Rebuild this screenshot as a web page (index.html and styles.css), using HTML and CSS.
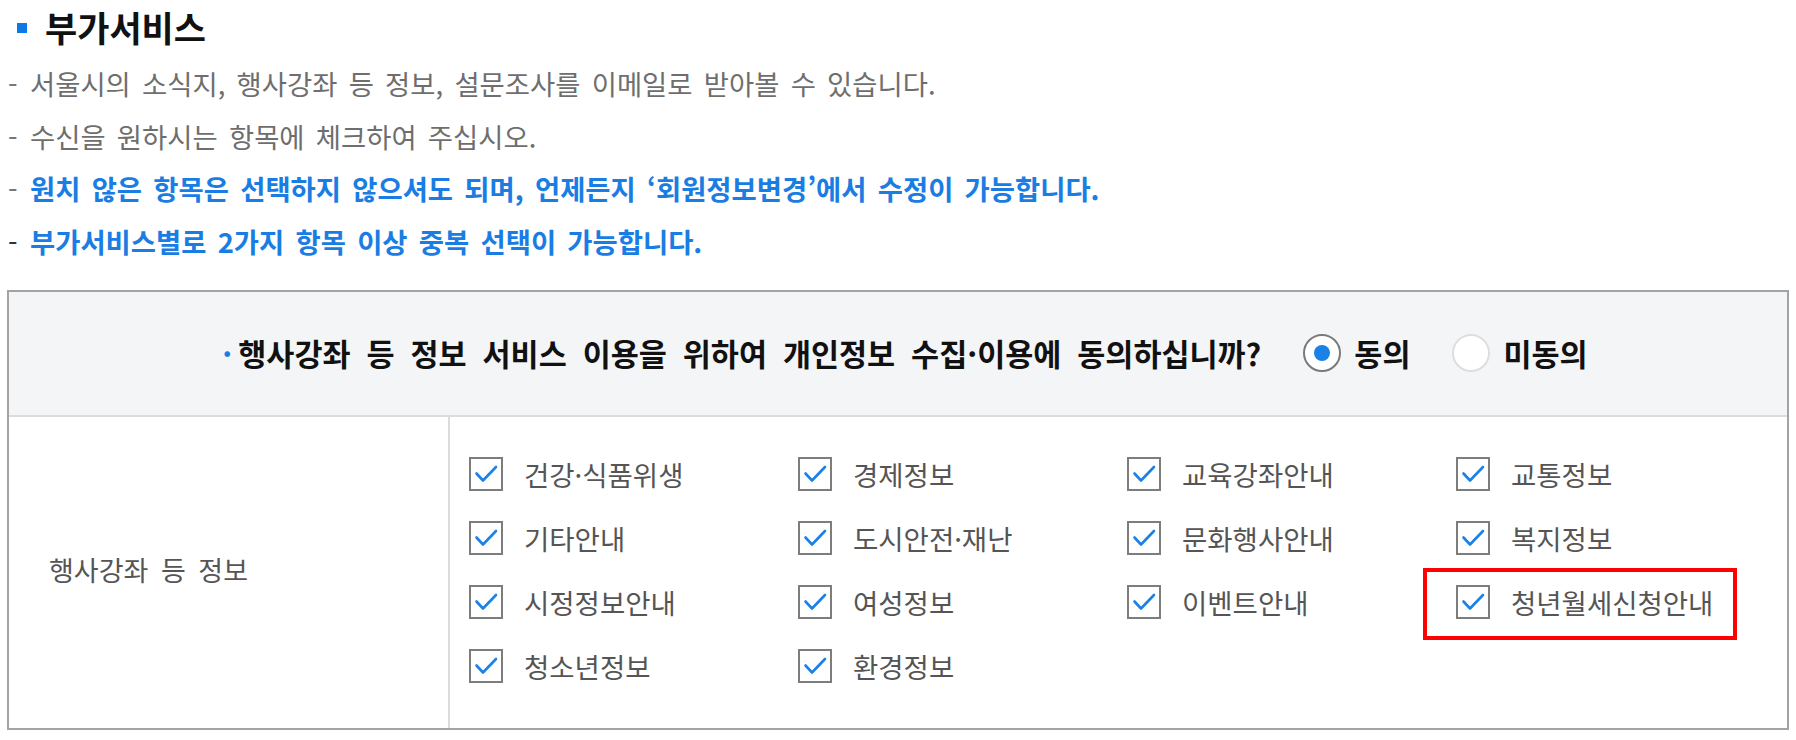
FILE: index.html
```html
<!DOCTYPE html>
<html lang="ko">
<head>
<meta charset="utf-8">
<link rel="stylesheet" href="styles.css">
</head>
<body>
<div class="page">
  <h2 class="title"><span class="sq"></span>부가서비스</h2>
  <ul class="notes">
    <li class="gray"><span class="dash">-</span>서울시의 소식지, 행사강좌 등 정보, 설문조사를 이메일로 받아볼 수 있습니다.</li>
    <li class="gray"><span class="dash">-</span>수신을 원하시는 항목에 체크하여 주십시오.</li>
    <li class="blue"><span class="dash">-</span>원치 않은 항목은 선택하지 않으셔도 되며, 언제든지 ‘회원정보변경’에서 수정이 가능합니다.</li>
    <li class="blue"><span class="dash dark">-</span>부가서비스별로 2가지 항목 이상 중복 선택이 가능합니다.</li>
  </ul>
  <div class="table">
    <div class="thead">
      <span class="q"><span class="dot">·</span>행사강좌 등 정보 서비스 이용을 위하여 개인정보 수집·이용에 동의하십니까?</span>
      <label class="radio on"><span class="rb"></span>동의</label>
      <label class="radio"><span class="rb"></span>미동의</label>
    </div>
    <div class="tbody">
      <div class="label">행사강좌 등 정보</div>
      <div class="grid">
        <div class="item"><svg class="cb" viewBox="0 0 34 34"><rect x="1" y="1" width="32" height="32"/><path d="M7.5 16.5 L14 23.5 L27 10"/></svg><span>건강·식품위생</span></div>
        <div class="item"><svg class="cb" viewBox="0 0 34 34"><rect x="1" y="1" width="32" height="32"/><path d="M7.5 16.5 L14 23.5 L27 10"/></svg><span>경제정보</span></div>
        <div class="item"><svg class="cb" viewBox="0 0 34 34"><rect x="1" y="1" width="32" height="32"/><path d="M7.5 16.5 L14 23.5 L27 10"/></svg><span>교육강좌안내</span></div>
        <div class="item"><svg class="cb" viewBox="0 0 34 34"><rect x="1" y="1" width="32" height="32"/><path d="M7.5 16.5 L14 23.5 L27 10"/></svg><span>교통정보</span></div>
        <div class="item"><svg class="cb" viewBox="0 0 34 34"><rect x="1" y="1" width="32" height="32"/><path d="M7.5 16.5 L14 23.5 L27 10"/></svg><span>기타안내</span></div>
        <div class="item"><svg class="cb" viewBox="0 0 34 34"><rect x="1" y="1" width="32" height="32"/><path d="M7.5 16.5 L14 23.5 L27 10"/></svg><span>도시안전·재난</span></div>
        <div class="item"><svg class="cb" viewBox="0 0 34 34"><rect x="1" y="1" width="32" height="32"/><path d="M7.5 16.5 L14 23.5 L27 10"/></svg><span>문화행사안내</span></div>
        <div class="item"><svg class="cb" viewBox="0 0 34 34"><rect x="1" y="1" width="32" height="32"/><path d="M7.5 16.5 L14 23.5 L27 10"/></svg><span>복지정보</span></div>
        <div class="item"><svg class="cb" viewBox="0 0 34 34"><rect x="1" y="1" width="32" height="32"/><path d="M7.5 16.5 L14 23.5 L27 10"/></svg><span>시정정보안내</span></div>
        <div class="item"><svg class="cb" viewBox="0 0 34 34"><rect x="1" y="1" width="32" height="32"/><path d="M7.5 16.5 L14 23.5 L27 10"/></svg><span>여성정보</span></div>
        <div class="item"><svg class="cb" viewBox="0 0 34 34"><rect x="1" y="1" width="32" height="32"/><path d="M7.5 16.5 L14 23.5 L27 10"/></svg><span>이벤트안내</span></div>
        <div class="item marked"><svg class="cb" viewBox="0 0 34 34"><rect x="1" y="1" width="32" height="32"/><path d="M7.5 16.5 L14 23.5 L27 10"/></svg><span>청년월세신청안내</span><span class="redbox"></span></div>
        <div class="item"><svg class="cb" viewBox="0 0 34 34"><rect x="1" y="1" width="32" height="32"/><path d="M7.5 16.5 L14 23.5 L27 10"/></svg><span>청소년정보</span></div>
        <div class="item"><svg class="cb" viewBox="0 0 34 34"><rect x="1" y="1" width="32" height="32"/><path d="M7.5 16.5 L14 23.5 L27 10"/></svg><span>환경정보</span></div>
      </div>
    </div>
  </div>
</div>
</body>
</html>
```

FILE: styles.css
```css
html, body {
  margin: 0;
  padding: 0;
  background: #fff;
}

.page {
  width: 1796px;
  font-family: "Noto Sans CJK KR", "Noto Sans", sans-serif;
}

.title {
  margin: 0;
  height: 57px;
  box-sizing: border-box;
  padding: 0 0 4px 17px;
  display: flex;
  align-items: center;
  font-size: 35px;
  font-weight: 700;
  color: #111;
}

.sq {
  width: 10px;
  height: 10px;
  background: #0a7be6;
  margin-right: 18px;
  margin-top: 3px;
  flex: none;
}

.notes {
  list-style: none;
  margin: 0;
  padding: 0 0 0 8px;
}

.notes li {
  height: 52.7px;
  line-height: 52.7px;
  font-size: 27.4px;
  word-spacing: 3.6px;
  white-space: nowrap;
}

.notes .gray {
  color: #6e6e6e;
}

.notes .blue {
  color: #1a7de3;
  font-weight: 700;
}

.dash {
  display: inline-block;
  width: 22px;
  color: #777;
  font-weight: 400;
}

.dash.dark {
  color: #333;
}

.table {
  margin: 22px 7px 0 7px;
  border: 2px solid #a3a3a3;
}

.thead {
  height: 123px;
  background: #f4f5f7;
  border-bottom: 2px solid #dcdcdc;
  display: flex;
  align-items: center;
  justify-content: center;
  padding-left: 14px;
  font-size: 30.5px;
  font-weight: 700;
  color: #111;
}

.q {
  margin-right: 42px;
  white-space: nowrap;
  word-spacing: 7.4px;
}

.dot {
  color: #1a7de3;
  margin-right: 6px;
}

.radio {
  display: flex;
  align-items: center;
  margin-right: 42px;
}

.radio:last-child {
  margin-right: 0;
}

.rb {
  width: 34px;
  height: 34px;
  border-radius: 50%;
  border: 2px solid #dedede;
  background: #fff;
  margin-right: 13px;
  display: flex;
  align-items: center;
  justify-content: center;
}

.radio.on .rb {
  border-color: #7a7a7a;
}

.radio.on .rb::after {
  content: "";
  width: 16px;
  height: 16px;
  border-radius: 50%;
  background: #1a82e6;
}

.tbody {
  display: flex;
  height: 311px;
}

.label {
  width: 441px;
  border-right: 2px solid #dcdcdc;
  display: flex;
  align-items: center;
  padding: 0 0 6px 40px;
  box-sizing: border-box;
  font-size: 27px;
  color: #555;
  word-spacing: 5px;
}

.grid {
  display: grid;
  grid-template-columns: repeat(4, 329px);
  grid-auto-rows: 64px;
  padding: 25px 0 0 19px;
  align-content: start;
}

.item {
  position: relative;
  display: flex;
  align-items: center;
  font-size: 27.5px;
  color: #555;
}

.cb {
  width: 34px;
  height: 34px;
  margin-right: 21px;
  flex: none;
}

.cb rect {
  fill: #fff;
  stroke: #7d7d7d;
  stroke-width: 2;
}

.cb path {
  fill: none;
  stroke: #1a82e6;
  stroke-width: 2.6;
  stroke-linecap: round;
  stroke-linejoin: round;
}

.redbox {
  position: absolute;
  left: -33px;
  top: -2px;
  width: 314px;
  height: 72px;
  border: 4.5px solid #ff0000;
  box-sizing: border-box;
}
```
